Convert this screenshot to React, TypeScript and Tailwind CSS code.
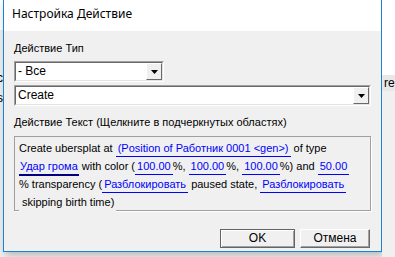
const Arrow = () => (
  <div className="w-[16px] h-full bg-[#f0f0f0] border-t border-l border-t-white border-l-white border-b border-r border-b-[#696969] border-r-[#696969] flex items-center justify-center">
    <svg width="7" height="4" viewBox="0 0 7 4">
      <path d="M0 0h7L3.5 4z" fill="#000" />
    </svg>
  </div>
)

const Combo = ({ value, width }: { value: string; width: string }) => (
  <div className={`${width} h-[21px] border-t border-l border-t-[#a0a0a0] border-l-[#a0a0a0] border-b border-r border-b-white border-r-white`}>
    <div className="h-full flex border-t border-l border-t-[#696969] border-l-[#696969] border-b border-r border-b-[#e3e3e3] border-r-[#e3e3e3] bg-white">
      <div className="flex-1 pl-[2px] leading-[17px] text-[12px]">{value}</div>
      <Arrow />
    </div>
  </div>
)

const Link = ({ children, strong }: { children: React.ReactNode; strong?: boolean }) => (
  <span
    className={
      strong
        ? 'inline-block px-[1px] leading-[15px] text-[#0000ff] border-b-2 border-[#000080]'
        : 'inline-block px-[2px] leading-[15px] text-[#0000ff] border-b border-[#0000ff]'
    }
  >
    {children}
  </span>
)

const App = () => {
  return (
    <div className="w-[395px] h-[257px] overflow-hidden bg-[#f0f0f0] font-['Liberation_Sans',Arial,sans-serif] text-[11px] text-black">
      <div className="flex h-[257px]">
        {/* strip of the window behind */}
        <div className="w-[4px] bg-white flex flex-col">
          <div className="h-[30px]" />
          <div className="flex-1 bg-[#f0f0f0] text-[12px] leading-[20px] pt-[38px] -ml-[3px]">
            <div>c</div>
            <div>s</div>
          </div>
        </div>
        <div className="w-[380px] h-[252px] border-x border-b border-[#1883d7] bg-[#f0f0f0] shadow-[2px_3px_8px_rgba(0,0,0,0.25)] flex flex-col">
          <div className="h-[31px] bg-white flex items-center pl-[8px] pb-[3px] font-['Noto_Sans',sans-serif] text-[12px]">
            Настройка Действие
          </div>
          <div className="flex-1 px-[10px] pt-[10px] flex flex-col">
            <div className="leading-[14px]">Действие Тип</div>
            <div className="mt-[6px]">
              <Combo value="- Все" width="w-[150px]" />
            </div>
            <div className="mt-[3px]">
              <Combo value="Create" width="w-[357px]" />
            </div>
            <div className="mt-[9px] leading-[14px]">Действие Текст (Щелкните в подчеркнутых областях)</div>
            <div className="mt-[7px] w-[357px] h-[75px] border border-[#a0a0a0] shadow-[1px_1px_0_#fff] pl-[4px] pt-[2px] leading-[18px]">
              <div className="h-[18px]">
                Create ubersplat at <Link>(Position of Работник 0001 &lt;gen&gt;)</Link> of type
              </div>
              <div className="h-[18px]">
                <Link strong>Удар грома</Link> with color (<Link>100.00</Link>%, <Link>100.00</Link>%, <Link>100.00</Link>%) and <Link>50.00</Link>
              </div>
              <div className="h-[18px]">
                % transparency (<Link>Разблокировать</Link> paused state, <Link>Разблокировать</Link>
              </div>
              <div className="relative w-fit h-[20px] bg-[#f0f0f0] pl-[3px] pr-[2px] leading-[18px]">skipping birth time)</div>
            </div>
            <div className="mt-[18px] flex justify-end gap-[5px] pr-[1px]">
              <button className="w-[75px] h-[19px] bg-[#f0f0f0] border border-[#646464] shadow-[inset_1px_1px_0_#fff,inset_-1px_-1px_0_#a0a0a0] text-[12px] leading-[15px]">
                OK
              </button>
              <button className="w-[70px] h-[19px] bg-[#f0f0f0] border-t border-l border-t-white border-l-white border-b border-r border-b-[#696969] border-r-[#696969] shadow-[inset_-1px_-1px_0_#a0a0a0] text-[12px] leading-[15px]">
                Отмена
              </button>
            </div>
          </div>
        </div>
        <div className="flex-1 bg-white flex flex-col">
          <div className="h-[75px]" />
          <div className="h-[16px] bg-[#e8e8e8] text-[12px] leading-[16px] pl-[2px]">rer</div>
          <div className="flex-1 bg-[#f0f0f0]" />
        </div>
      </div>
    </div>
  )
}

export default App
